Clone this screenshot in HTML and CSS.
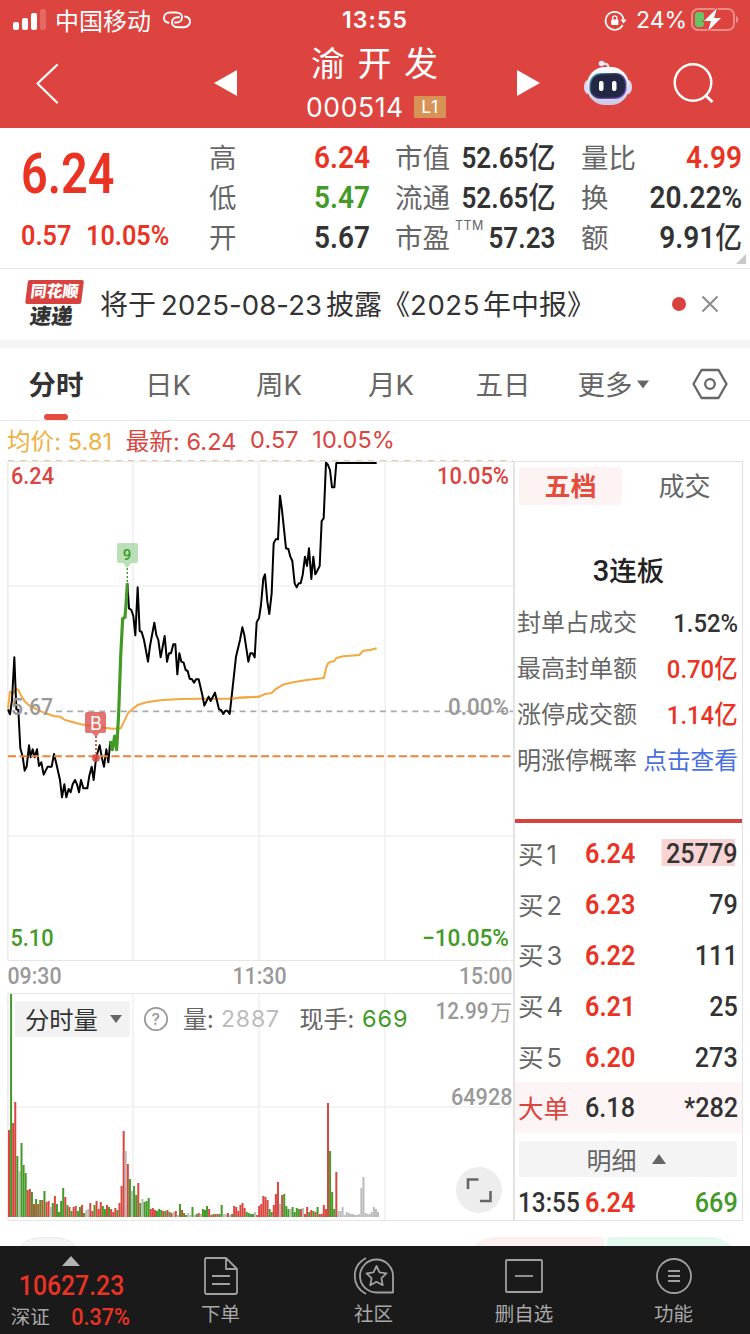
FILE: index.html
```html
<!DOCTYPE html>
<html lang="zh-CN">
<head>
    <meta charset="UTF-8">
    <meta name="viewport" content="width=device-width, initial-scale=1.0">
    <title>渝开发 000514</title>
    <link rel="stylesheet" href="styles.css">
</head>
<body>
    <header class="top">
        <div class="status">
            <svg class="signal" width="34" height="22" viewBox="0 0 34 22">
                <g fill="#fff"><rect x="0" y="13" width="6" height="8" rx="2"/><rect x="9" y="9" width="6" height="12" rx="2"/><rect x="18" y="4" width="6" height="17" rx="2"/><rect x="27" y="0" width="6" height="21" rx="2" opacity=".2"/></g>
            </svg>
            <span class="carrier">中国移动</span>
            <svg class="link" width="28" height="18" viewBox="0 0 28 18" fill="none" stroke="#fff" stroke-width="1.900" stroke-linecap="round">
                <path d="M5.500 11.800C2.800 11.200 1 9.200 1 7c0-3.200 2.600-5.500 6-5.500h6c3.500 0 6 2 6 4.700 0 3-2.300 5.300-5.500 5.300H12"/>
                <path d="M22 5.500c2.900.5 5 2.600 5 5 0 3.200-2.600 5.700-6 5.700h-6c-3.500 0-6-1.900-6-4.700 0-3 2.300-5.300 5.500-5.300H16"/>
            </svg>
            <span class="clock">13:55</span>
            <svg class="lock" width="22" height="20" viewBox="0 0 22 20" fill="none" stroke="#fff" stroke-width="1.700">
                <path d="M17.600 14A9 9 0 1 1 18.500 8.500"/>
                <path d="M15.500 8.500h6l-3 4z" fill="#fff" stroke="none"/>
                <rect x="6.200" y="8.500" width="7.200" height="5.500" rx="1" fill="#fff" stroke="none"/>
                <path d="M7.700 9V7a2.100 2.100 0 0 1 4.200 0v2" stroke-width="1.300"/>
            </svg>
            <span class="percent">24%</span>
            <svg class="battery" width="49" height="24" viewBox="0 0 49 24">
                <rect x="1" y="1" width="42" height="21" rx="6" fill="none" stroke="#fff" stroke-opacity=".38" stroke-width="2"/>
                <path d="M45 8c3 1 3 6 0 7z" fill="#fff" opacity=".4"/>
                <rect x="4" y="4" width="9" height="15" rx="3" fill="#65c466"/>
                <path d="M26 0 13 13h7l-3 10 13-13h-7z" fill="#fff" stroke="#dd4440" stroke-width="2" paint-order="stroke"/>
            </svg>
        </div>
        <div class="titlebar">
            <svg class="back" width="24" height="42" viewBox="0 0 24 42" fill="none" stroke="#fff" stroke-width="2.200" stroke-linecap="round" stroke-linejoin="round"><path d="M21 2 1.500 20.500 21 39.500"/></svg>
            <svg class="prev" width="24" height="26" viewBox="0 0 24 26"><path d="M23 0v26L0 13z" fill="#fff"/></svg>
            <div class="stock">
                <h1>渝开发</h1>
                <div class="code"><span>000514</span><b>L1</b></div>
            </div>
            <svg class="next" width="24" height="26" viewBox="0 0 24 26"><path d="M0 0v26l23-13z" fill="#fff"/></svg>
            <svg class="robot" width="48" height="46" viewBox="0 0 48 46">
                <defs>
                    <linearGradient id="shell" x1="0" y1="0" x2="0" y2="1"><stop offset="0" stop-color="#fff"/><stop offset="1" stop-color="#c9c9e6"/></linearGradient>
                    <linearGradient id="face" x1="0" y1="0" x2="1" y2="1"><stop offset="0" stop-color="#58c3d0"/><stop offset=".4" stop-color="#343a6a"/><stop offset="1" stop-color="#8a5be6"/></linearGradient>
                </defs>
                <path d="M18 4c4-1 6.500 0 7 5" fill="none" stroke="#e4e2f2" stroke-width="2.500"/>
                <circle cx="17.500" cy="3.500" r="2.800" fill="#eceafa"/>
                <ellipse cx="4" cy="27" rx="4" ry="7" fill="#d8daf2"/><ellipse cx="44" cy="27" rx="4" ry="7" fill="#d8daf2"/>
                <rect x="3" y="7" width="42" height="38" rx="18" fill="url(#shell)"/>
                <rect x="5.500" y="13" width="37" height="26" rx="11" fill="url(#face)"/>
                <rect x="6.800" y="14.300" width="34.400" height="23.400" rx="10" fill="#222844"/>
                <rect x="15" y="21" width="4.500" height="10" rx="2" fill="#fff"/><rect x="28" y="21" width="4.500" height="10" rx="2" fill="#fff"/>
            </svg>
            <svg class="search" width="42" height="42" viewBox="0 0 42 42" fill="none" stroke="#fff" stroke-width="2.400"><circle cx="20" cy="19.500" r="18.300"/><path d="m32 32 7.500 7" stroke-width="3"/></svg>
        </div>
    </header>

    <section class="quote">
        <div class="price">
            <span class="din big">6.24</span>
            <div class="change"><span class="din">0.57</span><span class="din">10.05%</span></div>
        </div>
        <dl class="col1">
            <dt>高</dt><dd class="din red">6.24</dd>
            <dt>低</dt><dd class="din green">5.47</dd>
            <dt>开</dt><dd class="din">5.67</dd>
        </dl>
        <dl class="col2">
            <dt>市值</dt><dd class="din small">52.65<i>亿</i></dd>
            <dt>流通</dt><dd class="din small">52.65<i>亿</i></dd>
            <dt>市盈<sup>TTM</sup></dt><dd class="din small">57.23</dd>
        </dl>
        <dl class="col3">
            <dt>量比</dt><dd class="din red">4.99</dd>
            <dt>换</dt><dd class="din">20.22%</dd>
            <dt>额</dt><dd class="din">9.91<i>亿</i></dd>
        </dl>
        <svg class="corner" width="10" height="10"><path d="M10 0v10H0z" fill="#c8c8c8"/></svg>
    </section>

    <section class="notice">
        <div class="logo"><b>同花顺</b><strong>速递</strong></div>
        <p>将于<span class="date">2025-08-23</span>披露《<span class="year">2025</span>年中报》</p>
        <span class="dot"></span>
        <svg class="close" width="18" height="18" viewBox="0 0 18 18" stroke="#8f8f8f" stroke-width="2.200"><path d="m1.500 1.500 15 15m0-15-15 15"/></svg>
    </section>

    <nav class="tabs">
        <a class="active">分时</a>
        <a>日K</a>
        <a>周K</a>
        <a>月K</a>
        <a>五日</a>
        <a class="more">更多<svg width="12" height="9" viewBox="0 0 12 9"><path d="M0 .5h12L6 8.500z" fill="#666"/></svg></a>
        <svg class="setting" width="36" height="32" viewBox="0 0 36 32" fill="none" stroke="#666" stroke-width="2.300" stroke-linejoin="round"><path d="M9.500 2h17L34.500 16l-8 14h-17L1.500 16z"/><circle cx="18" cy="16" r="4.800"/></svg>
    </nav>

    <div class="legend">
        <span class="avg">均价: <em>5.81</em></span><span>最新: <em>6.24</em></span><span><em>0.57</em></span><span><em>10.05%</em></span>
    </div>

    <main class="board">
        <div class="charts">
            <svg class="price-chart" width="506" height="501" viewBox="8 460 506 501">
                <path d="M8 460.500H513" stroke="#e6cda3" stroke-dasharray="6 6"/>
                <g stroke="#f1f1f1" stroke-width="1.700"><path d="M133 462v498M259 462v498M385 462v498M8 586h505M8 836h505"/></g>
                <path d="M8 461.500h505M7.900 461v499M8 960.500h505" stroke="#e6e6e6" stroke-width="1.200" fill="none"/>
                <path d="M56 711.300H513" stroke="#aaa" stroke-width="1.800" stroke-dasharray="6 4.800"/>
                <g fill="none" stroke-width="6" stroke-linejoin="round">
                    <g transform="translate(0 600) scale(.33333)">
                        <polyline stroke="#f3a93f" points="24,325 30,275 40,280 48,266 55,270 65,290 75,305 90,318 125,335 160,348 180,350 195,360 240,372 290,381 340,386 362,385 372,365 385,338 400,325 415,314 440,307 480,301 540,297 600,296 700,296 715,293 780,290"/>
                        <polyline stroke="#000" points="24,328 30,343 36,300 43,172 49,328 55,330 61,445 68,470 74,512 80,500 87,436 92,472 98,448 104,472 111,448 117,498 124,487 131,524 137,512 143,500 155,500 162,462 168,487 180,540 186,592 193,553 199,592 206,567 212,577 218,553 225,540 231,553 237,577 243,540 250,565 262,565 268,527 275,500 281,540 288,475 299,436 306,475 312,500 319,448 325,487 331,423"/>
                        <polyline stroke="#000" points="382,-50 387,25 394,30 400,48 406,106 413,-38 419,93 425,96 432,120 444,185 450,138 463,68 469,105 475,120 482,172 494,108 501,185 507,160 513,160 520,133 526,133 532,223 538,160 544,185 551,188 557,210 563,213 569,236 576,238 582,248 588,238 596,238 607,285 613,317 626,290 632,303 645,278 657,328 663,330 670,342 676,332 682,332 689,342 695,290 708,170 720,120 727,82 733,105 745,185 751,160 758,160 764,172 770,66"/>
                        <polyline stroke="#439a27" stroke-width="9.500" points="331,423 337,449 344,408 350,449 356,340 362,170 368,56 375,52 379,0 382,-50"/>
                    </g>
                    <g transform="translate(200 450) scale(.33333)">
                        <polyline stroke="#f3a93f" points="95,746 115,743 170,741 180,739 195,732 215,729 227,717 235,713 248,704 280,697 320,690 365,685 372,683 378,655 384,640 390,636 403,633 409,624 430,619 478,615 490,602 510,600 530,595"/>
                        <polyline stroke="#000" points="170,516 177,505 183,465 190,385 195,373 202,455 208,492 215,430 221,280 227,268 234,268 240,137 246,180 258,295 265,297 271,320 277,333 284,400 290,412 296,400 302,400 308,375 315,320 321,348 327,295 334,387 340,320 346,373 352,362 359,348 365,213 371,205 378,38 384,45 390,60 396,112 403,112 409,39 530,39"/>
                    </g>
                </g>
                <path d="M8 756.300H513" stroke="#ec8336" stroke-width="1.900" stroke-dasharray="8 3.500"/>
                <path d="M127.300 568v16" stroke="#439a27" stroke-width="1.400" stroke-dasharray="2 2"/>
                <path d="M119 543h17a2 2 0 0 1 2 2v16a2 2 0 0 1-2 2h-4.500l-4.200 5-4.300-5h-4a2 2 0 0 1-2-2v-16a2 2 0 0 1 2-2z" fill="#9bd196" opacity=".68"/>
                <text x="122.800" y="559.500" class="t nine" fill="#3a9a24">9</text>
                <path d="M96 736v17" stroke="#d9453f" stroke-width="1.800" stroke-dasharray="2 2"/>
                <circle cx="96" cy="758" r="4" fill="#d9453f" opacity=".85"/>
                <path d="M87 712h17a2 2 0 0 1 2 2v17a2 2 0 0 1-2 2h-4.500l-3.500 4-4-4h-5a2 2 0 0 1-2-2v-17a2 2 0 0 1 2-2z" fill="#db514d" opacity=".8"/>
                <text x="90" y="729.500" class="sans" font-size="18" fill="#fff">B</text>
                <text x="11" y="484" class="t" fill="#d9453f" textLength="43" lengthAdjust="spacingAndGlyphs">6.24</text>
                <text x="437" y="484" class="t" fill="#d9453f" textLength="72" lengthAdjust="spacingAndGlyphs">10.05%</text>
                <text x="11" y="715" class="t" fill="#999" textLength="42" lengthAdjust="spacingAndGlyphs">5.67</text>
                <text x="448" y="715" class="t" fill="#999" textLength="61" lengthAdjust="spacingAndGlyphs">0.00%</text>
                <text x="10.500" y="946" class="t" fill="#439a27" textLength="43" lengthAdjust="spacingAndGlyphs">5.10</text>
                <text x="422" y="946" class="t" fill="#439a27" textLength="87" lengthAdjust="spacingAndGlyphs">−10.05%</text>
            </svg>
            <svg class="axis" width="506" height="32" viewBox="8 961 506 32">
                <g class="t" fill="#999">
                    <text x="7.500" y="984" textLength="54" lengthAdjust="spacingAndGlyphs">09:30</text>
                    <text x="232.500" y="984" textLength="54" lengthAdjust="spacingAndGlyphs">11:30</text>
                    <text x="459" y="984" textLength="53.500" lengthAdjust="spacingAndGlyphs">15:00</text>
                </g>
            </svg>
            <svg class="volume-chart" width="506" height="228" viewBox="8 993 506 228">
                <path d="M133 993v227M259 993v227M385 993v227M8 1107h505" stroke="#f1f1f1" stroke-width="1.700"/>
                <path d="M8 993.500h505M7.900 993v227M8 1220.500h505" stroke="#e6e6e6" stroke-width="1.200"/>
                <g id="bars"></g>
                <rect x="15" y="1001" width="115" height="36" rx="3" fill="#f2f2f2"/>
                <text x="25" y="1028.500" class="cn" font-size="24.300" fill="#333">分时量</text>
                <path d="M110 1015h12l-6 8z" fill="#666"/>
                <circle cx="156" cy="1019" r="11.200" fill="none" stroke="#999" stroke-width="1.800"/>
                <text x="151.500" y="1025" class="sans" font-size="16" font-weight="500" fill="#999">?</text>
                <text x="183" y="1028" class="cn" font-size="24" fill="#666">量:</text>
                <text x="221" y="1027" class="sans" font-size="23" fill="#bbb" textLength="58">2887</text>
                <text x="299.500" y="1028" class="cn" font-size="24" fill="#666">现手:</text>
                <text x="362" y="1027" class="sans" font-size="23.500" fill="#439a27" textLength="45.500">669</text>
                <text x="435.500" y="1019" class="t" fill="#999" textLength="53" lengthAdjust="spacingAndGlyphs">12.99</text>
                <text x="490" y="1019.500" class="cn" font-size="22" fill="#999">万</text>
                <text x="451" y="1105" class="t" fill="#999" textLength="61.500" lengthAdjust="spacingAndGlyphs">64928</text>
                <circle cx="479" cy="1190" r="23" fill="#ededed"/>
                <path d="M468 1189v-9.500h10.500M490.500 1191v10h-10.500" fill="none" stroke="#666" stroke-width="2.600"/>
            </svg>
        </div>

        <aside class="depth">
            <div class="switch"><a class="on">五档</a><a>成交</a></div>
            <h2><span class="din">3</span>连板</h2>
            <ul class="facts">
                <li>封单占成交<span class="din">1.52%</span></li>
                <li>最高封单额<span class="din rise">0.70<i>亿</i></span></li>
                <li>涨停成交额<span class="din rise">1.14<i>亿</i></span></li>
                <li>明涨停概率<a>点击查看</a></li>
            </ul>
            <ul class="orders">
                <li><label>买<b>1</b></label><span class="din red">6.24</span><span class="din qty hot">25779</span></li>
                <li><label>买<b>2</b></label><span class="din red">6.23</span><span class="din qty">79</span></li>
                <li><label>买<b>3</b></label><span class="din red">6.22</span><span class="din qty">111</span></li>
                <li><label>买<b>4</b></label><span class="din red">6.21</span><span class="din qty">25</span></li>
                <li><label>买<b>5</b></label><span class="din red">6.20</span><span class="din qty">273</span></li>
                <li class="large"><label>大单</label><span class="din">6.18</span><span class="din qty">*282</span></li>
            </ul>
            <div class="detail">明细<svg width="14" height="10"><path d="M0 10h14L7 0z" fill="#666"/></svg></div>
            <div class="tick"><span class="din time">13:55</span><span class="din red">6.24</span><span class="din qty green">669</span></div>
        </aside>
    </main>

    <div class="peek"><i class="p1"></i><i class="p2"></i><i class="p3"></i></div>

    <footer class="bottom">
        <div class="index">
            <svg width="18" height="10"><path d="M0 10h18L9 0z" fill="#b3b3b3"/></svg>
            <span class="din">10627.23</span>
            <p>深证<span class="din">0.37%</span></p>
        </div>
        <a><svg width="36" height="40" viewBox="0 0 36 40"><path d="M3 2h20l11 11v23a2 2 0 0 1-2 2H3a2 2 0 0 1-1-2V3zM23 2v11h11M9 20h18M9 28h18"/></svg>下单</a>
        <a><svg width="42" height="40" viewBox="0 0 42 40"><path d="M13 2C-2 10-2 30 13 38M40 20v16.500H23.500A16.500 16.500 0 1 1 40 20zM23.500 10l3 6.400 7 .9-5.100 4.900 1.300 7-6.200-3.400-6.200 3.400 1.300-7-5.100-4.900 7-.9z"/></svg>社区</a>
        <a><svg width="40" height="40" viewBox="0 0 40 40"><rect x="2" y="4" width="36" height="32" rx="1"/><path d="M11 20h18"/></svg>删自选</a>
        <a><svg width="40" height="40" viewBox="0 0 40 40"><circle cx="20" cy="20" r="17"/><path d="M14 15h12M14 20h12M14 25h12"/></svg>功能</a>
    </footer>

    <script src="chart.js"></script>
</body>
</html>
```
FILE: styles.css
```css
* {
    box-sizing: border-box;
}

body {
    margin: 0;
    width: 750px;
    height: 1334px;
    overflow: hidden;
    display: flex;
    flex-direction: column;
    background: #fff;
    color: #333;
    font-family: Inter, "Noto Sans CJK SC", sans-serif;
    font-weight: 400;
}

h1, h2, p, ul, dl, dd {
    margin: 0;
    padding: 0;
    list-style: none;
    font-weight: 400;
}

i, em {
    font-style: normal;
}

svg {
    display: block;
    flex: none;
    overflow: visible;
}

/* narrow digits used for every quote value */
.din {
    display: inline-block;
    font-family: Roboto, "Noto Sans CJK SC", sans-serif;
    font-weight: 600;
    white-space: nowrap;
    transform: scaleX(.9);
    transform-origin: right center;
}

.din i {
    font-weight: 500;
}

.red { color: #ea3323; }
.green { color: #439a27; }
.rise { color: #ea3323; }

/* header */
.top {
    height: 128px;
    flex: none;
    background: #dd4440;
    color: #fff;
}

.status {
    height: 40px;
    display: flex;
    align-items: center;
    padding-left: 13px;
    font-size: 23px;
}

.signal { margin-top: -1px; }
.carrier { margin-left: 8px; margin-top: -2px; font-size: 24px; }
.link { margin-left: 12px; }
.clock { margin-left: 151px; width: 68px; font-weight: 600; letter-spacing: 1.1px; }
.lock { margin-left: 195px; margin-top: 1px; }
.percent { margin-left: 9px; width: 55px; }

.titlebar {
    height: 88px;
    display: flex;
    align-items: center;
    padding-left: 36px;
}

.prev { margin-left: 154px; margin-top: -2px; }

.stock {
    width: 279px;
    height: 88px;
    padding-left: 73px;
}

.stock h1 {
    font-size: 34px;
    line-height: 47px;
    letter-spacing: 12.5px;
}

.code {
    display: flex;
    align-items: center;
    height: 39px;
    margin-left: -5px;
    font-size: 26.5px;
    letter-spacing: .6px;
}

.code span { width: 98px; }

.code b {
    width: 32px;
    height: 22px;
    margin-left: 10px;
    background: #d79355;
    font-size: 17.5px;
    font-weight: 400;
    line-height: 22px;
    text-align: center;
}

.next { margin-top: -2px; }
.robot { margin-left: 43px; margin-top: -3px; }
.search { margin-left: 41px; }

/* quote */
.quote {
    position: relative;
    height: 141px;
    flex: none;
    padding-top: 10px;
    display: flex;
    border-bottom: 1px solid #e8e8e8;
}

.price {
    width: 209px;
    padding-left: 21px;
    color: #ea3323;
}

.price .din {
    transform-origin: left center;
}

.price .big {
    font-size: 55px;
    line-height: 73px;
    transform: scaleX(.85);
}

.change {
    display: flex;
    font-size: 28px;
    line-height: 50px;
}

.change .din:first-child { width: 65px; }

.quote dl {
    display: grid;
    grid-template-columns: 0 1fr;
    grid-template-rows: repeat(3, 40px);
    line-height: 40px;
}

.quote dt { font-size: 27.5px; color: #666; white-space: nowrap; }
.quote dd { font-size: 31.5px; text-align: right; justify-self: end; transform: scaleX(.89); }
.quote dd.small { font-size: 29px; transform: scaleX(.9); }
.quote dd i { font-size: 30px; line-height: 0; }
.quote sup { font-size: 12.5px; line-height: 0; letter-spacing: .4px; vertical-align: 18px; margin-left: 5px; }

.col1 { width: 161px; }
.col2 { width: 161px; margin-left: 25px; }
.col3 { width: 161px; margin-left: 25px; }

.corner {
    position: absolute;
    right: 4px;
    bottom: 4px;
}

/* notice */
.notice {
    height: 79px;
    flex: none;
    display: flex;
    align-items: center;
    border-bottom: 8px solid #f4f4f4;
}

.logo {
    width: 56px;
    margin-left: 25px;
    margin-right: 2px;
    transform: skewX(-7deg);
    text-align: center;
}

.logo b {
    display: block;
    height: 24px;
    border-radius: 2px;
    background: #d8423e;
    color: #fff;
    font-size: 16px;
    font-weight: 900;
    line-height: 23px;
}

.logo strong {
    display: block;
    font-size: 21.5px;
    font-weight: 900;
    line-height: 25px;
}

.notice p {
    width: 579px;
    margin: -4px 0 0 17px;
    font-size: 28px;
    white-space: nowrap;
}

.notice .date { display: inline-block; width: 165px; margin-left: 5px; font-size: 27.5px; letter-spacing: .1px; }
.notice .year { display: inline-block; width: 73px; font-size: 27.5px; letter-spacing: .6px; }

.dot {
    width: 14px;
    height: 14px;
    border-radius: 50%;
    background: #d8423e;
    margin: -1px 0 0 -7px;
}

.close { margin: -1px 0 0 15px; }

/* tabs */
.tabs {
    height: 73px;
    flex: none;
    display: grid;
    grid-template-columns: 112px 112px 110px 114px 110px 112px 80px;
    justify-items: center;
    align-items: center;
    border-bottom: 1px solid #e8e8e8;
    font-size: 27.5px;
    color: #666;
}

.tabs a { display: flex; align-items: center; gap: 4px; margin-top: -3px; white-space: nowrap; }
.tabs .more { margin-left: -2px; }
.more svg { margin-top: 3px; }

.tabs .active {
    position: relative;
    color: #333;
    font-weight: 600;
}

.tabs .active::after {
    content: "";
    position: absolute;
    left: 50%;
    bottom: -17px;
    width: 24px;
    height: 6px;
    margin-left: -12px;
    border-radius: 3px;
    background: #e64c3e;
}

.legend {
    height: 39px;
    flex: none;
    display: flex;
    align-items: center;
    padding: 0 0 2px 7px;
    gap: 13.5px;
    font-size: 23.5px;
    letter-spacing: .1px;
    color: #d9453f;
    white-space: nowrap;
}

.legend .avg { color: #efb041; }

/* charts and depth */
.board {
    height: 761px;
    flex: none;
    display: flex;
    padding-left: 8px;
}

.charts { width: 506px; }

.t {
    font-family: Roboto, sans-serif;
    font-size: 23px;
    font-weight: 500;
}

.nine { font-size: 15px; }
.sans { font-family: Inter, sans-serif; }
.cn { font-family: "Noto Sans CJK SC", sans-serif; }

.depth {
    width: 230px;
    margin-top: 1px;
    margin-left: -1px;
    border: 1px solid #e3e3e3;
    border-left-width: 2px;
}

.switch {
    display: grid;
    grid-template-columns: 103px 123px;
    padding: 5px 0 0 4px;
    height: 43px;
    font-size: 26px;
    line-height: 40px;
    text-align: center;
    color: #666;
}

.switch a {
    height: 38px;
    padding-left: 2px;
}

.switch .on {
    padding-left: 0;
    background: #fdf3f3;
    border-radius: 4px;
    color: #e64c3e;
    font-weight: 700;
}

.depth h2 {
    height: 95px;
    padding-top: 46px;
    font-size: 27.5px;
    font-weight: 500;
    line-height: 40px;
    text-align: center;
    color: #222;
}

.depth h2 .din { font-size: 29px; font-weight: 500; transform: none; }

.facts {
    height: 223px;
    border-bottom: 4px solid #d8423e;
    line-height: 46px;
    font-size: 24px;
    color: #666;
}

.facts li {
    height: 46px;
    display: flex;
    justify-content: space-between;
    padding: 0 4px 0 2px;
    white-space: nowrap;
}

.facts .din { font-size: 26.5px; font-weight: 500; color: #333; }
.facts .din i { font-size: 26px; line-height: 0; }
.facts .din.rise { color: #ea3323; }
.facts a { font-size: 23.7px; color: #4a6fe0; }

.orders { padding-top: 5px; }

.orders li,
.tick {
    height: 50.8px;
    display: grid;
    grid-template-columns: 68px 60px 1fr;
    align-items: center;
    padding: 1px 4px 0 3px;
    font-size: 25.5px;
}

.orders label { margin-top: -3px; color: #666; }
.orders label b { margin-left: 3px; font-weight: 400; }
.orders .din, .tick .din { margin-left: -1px; font-size: 28px; font-weight: 500; transform-origin: left center; }
.orders .red, .tick .red { font-weight: 600; }
.orders .din.qty, .tick .din.qty { justify-self: end; transform-origin: right center; }

.hot {
    padding-left: 5px;
    background: linear-gradient(#f9d4d4, #f9d4d4) 0 2px / 96% 27px no-repeat;
}

.orders .large { background: #fdf5f5; }
.orders .large label { color: #d9453f; }

.detail {
    height: 36px;
    margin: 8px 5px 0 4px;
    padding-right: 4px;
    display: flex;
    align-items: center;
    justify-content: center;
    gap: 15px;
    background: #f4f4f4;
    font-size: 25px;
    color: #666;
}

.tick { height: 50px; }
.tick .din.time { margin-left: 0; transform: scaleX(.87); }

/* tops of the buttons behind the bottom bar */
.peek {
    height: 25px;
    flex: none;
    display: flex;
    padding-top: 16px;
    overflow: hidden;
}

.peek i { height: 60px; }
.p1 { width: 74px; margin-left: 11px; border-radius: 30px; border: 1px solid #eaeaea; background: #f5f5f5; }
.p2 { width: 139px; margin-left: 380px; border-radius: 30px 4px 0 0; background: #fdf0f0; }
.p3 { width: 133px; margin-left: 3px; border-radius: 4px 30px 0 0; background: #e4f8ee; }

.bottom {
    height: 88px;
    flex: none;
    display: grid;
    grid-template-columns: 145px 151px 155px 146px 153px;
    background: #1a1a1a;
    color: #a8a8a8;
    font-size: 19.5px;
}

.bottom a {
    display: flex;
    flex-direction: column;
    align-items: center;
    padding-top: 10px;
    line-height: 37px;
}

.bottom a svg {
    fill: none;
    stroke: #a0a0a0;
    stroke-width: 1.8;
    stroke-linejoin: round;
}

.index {
    display: flex;
    flex-direction: column;
    align-items: center;
    padding: 10px 4px 0 0;
}

.index .din { margin-left: 2px; color: #ea3323; font-weight: 500; font-size: 27.5px; line-height: 39px; transform-origin: center; }
.index p { display: flex; align-items: center; margin-left: 3px; line-height: 25px; }
.index p .din { font-size: 24px; line-height: 25px; margin-left: 18px; }
```
FILE: chart.js
```js
// volume bars, one per minute: height in px + colour (r up, g down, n flat)
const volumes = `87r 223g 94r 115r 61g 46n 74g 52g 44g 27r 28r 25g 13r 18g 13r 17g 17r 26g 15r 16r
10n 14g 21r 13g 5g 16g 29g 20r 12g 10r 6g 10r 11r 6g 10g 12r 4g 7n 8n 14r
6r 12g 16r 8r 15r 11g 8g 12r 10g 8r 5r 9r 7g 14r 31r 86r 66n 53r 38g 26n
31g 22g 34r 14g 18n 15g 16g 19g 8r 9r 7r 6g 8g 7g 6r 6g 7r 5g 4r 5n
6r 2n 13g 7r 4g 2g 4n 2n 10g 2n 3g 4r 3n 8g 7g 11g 8r 2r 3g 3r
3r 3g 12g 3n 3n 4r 2n 3g 11r 10r 6r 12r 14r 9r 5g 4g 3g 3g 5n 2r
11r 13r 21r 20r 17r 8g 5g 12r 23r 35r 13n 22r 23g 11g 8g 8n 10g 5g 9g 8g
8r 9n 3r 10r 5g 7r 6g 5r 10g 3r 3r 12r 8r 114r 66g 25g 8g 45r 6n
6n 10n 2n 5n 4n 3n 3n 2n 2n 3n 29n 40n 4n 3n 3n 5n 10n 8n 5n`.split(/\s+/);

const colors = { r: '#d9453f', g: '#439a27', n: '#bbb' };
const step = 2.085;

document.getElementById('bars').innerHTML = volumes.map((v, i) => {
    const h = parseInt(v);
    return `<rect x="${(8 + i * step).toFixed(2)}" y="${1217 - h}" width="2" height="${h}" fill="${colors[v.slice(-1)]}"/>`;
}).join('');
```
